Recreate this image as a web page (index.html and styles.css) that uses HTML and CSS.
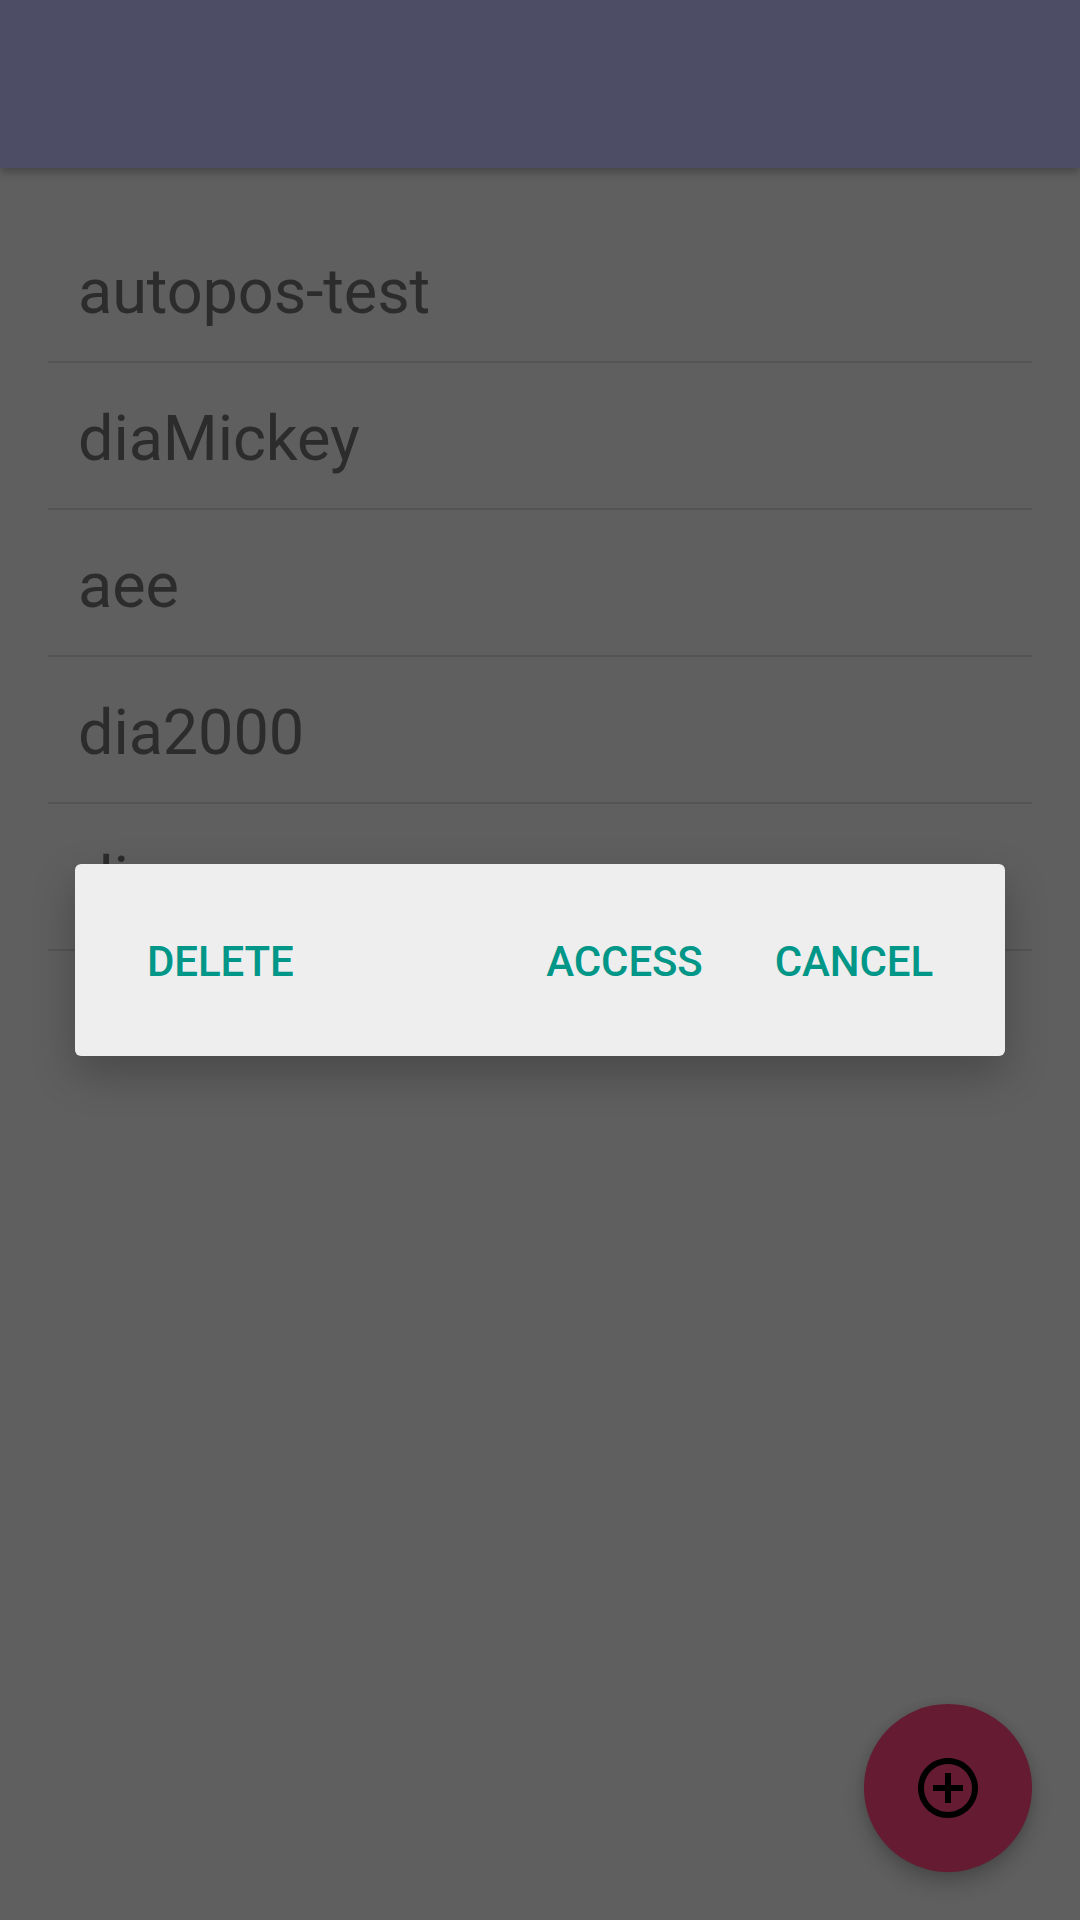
FILE: index.html
```html
<!DOCTYPE html>
<html lang="en">
<head>
<meta charset="utf-8">
<title>Devices</title>
<link rel="stylesheet" href="styles.css">
</head>
<body>
<div class="screen">
  <header class="app-bar"></header>
  <main>
    <ul class="list">
      <li class="item">autopos-test</li>
      <li class="item">diaMickey</li>
      <li class="item">aee</li>
      <li class="item">dia2000</li>
      <li class="item">dia</li>
    </ul>
  </main>
  <button class="fab" aria-label="Add">
    <svg class="fab-icon" viewBox="0 0 24 24">
      <path d="M13 7h-2v4H7v2h4v4h2v-4h4v-2h-4V7zm-1-5C6.48 2 2 6.48 2 12s4.480 10 10 10 10-4.480 10-10S17.520 2 12 2zm0 18c-4.410 0-8-3.590-8-8s3.590-8 8-8 8 3.590 8 8-3.590 8-8 8z"/>
    </svg>
  </button>
  <div class="overlay">
    <div class="dialog" role="dialog">
      <button class="action action-start">DELETE</button>
      <button class="action">ACCESS</button>
      <button class="action">CANCEL</button>
    </div>
  </div>
</div>
</body>
</html>
```
FILE: styles.css
```css
* {
  box-sizing: border-box;
}

body {
  margin: 0;
  font-family: Roboto, "Liberation Sans", sans-serif;
}

.screen {
  position: relative;
  width: 1080px;
  height: 1920px;
  overflow: hidden;
  background: #5f5f5f;
}

.app-bar {
  height: 168px;
  background: #4d4d65;
  box-shadow: 0 4px 9px rgba(0, 0, 0, 0.28);
}

.list {
  margin: 0;
  padding: 48px 48px 0;
  list-style: none;
}

.item {
  height: 147px;
  padding-left: 30px;
  border-bottom: 2px solid #545454;
  color: #2c2c2c;
  font-size: 63px;
  letter-spacing: -0.1px;
  line-height: 151px;
}

.fab {
  position: absolute;
  right: 48px;
  bottom: 48px;
  display: grid;
  place-items: center;
  width: 168px;
  height: 168px;
  padding: 0;
  border: 0;
  border-radius: 50%;
  background: #651b32;
  box-shadow: 0 12px 20px rgba(0, 0, 0, 0.2), 0 0 10px rgba(0, 0, 0, 0.1);
}

.fab-icon {
  width: 72px;
  height: 72px;
  fill: #000;
}

.overlay {
  position: absolute;
  inset: 0;
  display: grid;
  place-items: center;
}

.dialog {
  display: flex;
  align-items: center;
  gap: 72px;
  width: 930px;
  height: 192px;
  padding: 4px 72px 0;
  border-radius: 6px;
  background: #eee;
  box-shadow: 0 18px 44px rgba(0, 0, 0, 0.24);
}

.action {
  padding: 0;
  border: 0;
  background: none;
  color: #009688;
  font: 500 42px/60px Roboto, "Liberation Sans", sans-serif;
  letter-spacing: -0.1px;
}

.action-start {
  margin-right: auto;
}
```
